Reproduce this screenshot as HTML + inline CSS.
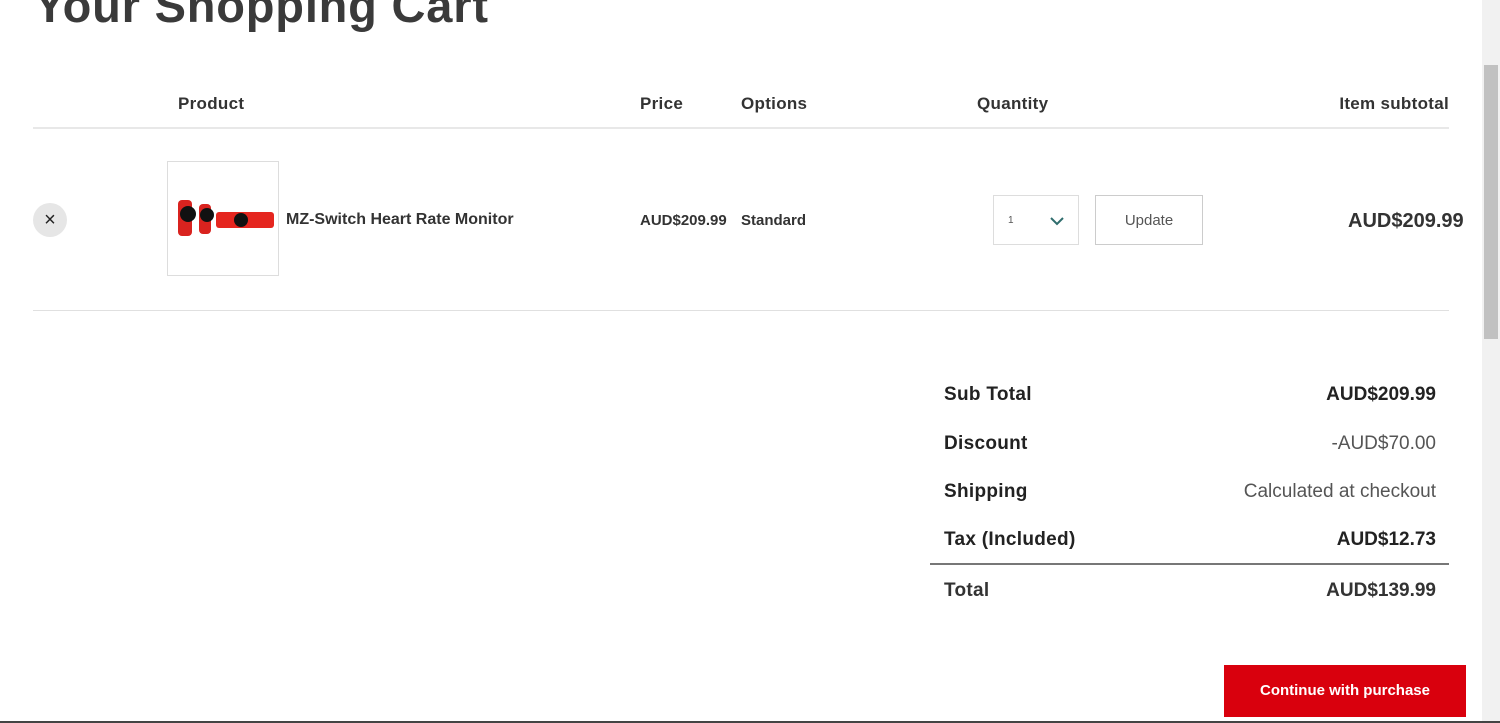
<!DOCTYPE html>
<html><head><meta charset="utf-8"><style>
*{margin:0;padding:0;box-sizing:border-box}
body{width:1500px;height:723px;overflow:hidden;background:#fff;font-family:"Liberation Sans",sans-serif;color:#333;position:relative}
.a{position:absolute;white-space:nowrap}
.h{font-weight:bold;font-size:17px;color:#333;letter-spacing:0.3px}
.b{font-weight:bold}
</style></head><body>
<div class="a" style="left:34px;top:-22px;font-size:47px;font-weight:bold;color:#3a3a3a;letter-spacing:0.8px">Your Shopping Cart</div>
<div class="a h" style="left:178px;top:94px">Product</div>
<div class="a h" style="left:640px;top:94px">Price</div>
<div class="a h" style="left:741px;top:94px">Options</div>
<div class="a h" style="left:977px;top:94px">Quantity</div>
<div class="a h" style="right:51px;top:94px">Item subtotal</div>
<div class="a" style="left:33px;top:127px;width:1416px;height:2px;background:#e8e8e8"></div>
<div class="a" style="left:33px;top:203px;width:34px;height:34px;border-radius:50%;background:#e6e6e6;text-align:center;line-height:34px;font-size:20px;color:#222">×</div>
<div class="a" style="left:167px;top:161px;width:112px;height:115px;border:1px solid #ddd;background:#fff">
<svg width="110" height="113" viewBox="0 0 110 113"><rect x="10" y="38" width="14" height="36" rx="4" fill="#d9231f"/><rect x="31" y="42" width="12" height="30" rx="4" fill="#d9231f"/><rect x="48" y="50" width="58" height="16" rx="3" fill="#e5261f"/><circle cx="20" cy="52" r="8" fill="#111"/><circle cx="39" cy="53" r="7" fill="#111"/><circle cx="73" cy="58" r="7" fill="#111"/></svg></div>
<div class="a b" style="left:286px;top:211px;font-size:16px">MZ-Switch Heart Rate Monitor</div>
<div class="a b" style="left:640px;top:212px;font-size:15px">AUD$209.99</div>
<div class="a b" style="left:741px;top:212px;font-size:15px">Standard</div>
<div class="a" style="left:993px;top:195px;width:86px;height:50px;border:1px solid #ddd"><span class="a" style="left:14px;top:19px;font-size:10px;color:#555">1</span>
<svg class="a" style="left:56px;top:20px" width="14" height="10" viewBox="0 0 14 10"><path d="M1 2 L7 8 L13 2" stroke="#2f6d6d" stroke-width="2" fill="none"/></svg></div>
<div class="a" style="left:1095px;top:195px;width:108px;height:50px;border:1px solid #ccc;text-align:center;line-height:50px;font-size:15px;color:#555">Update</div>
<div class="a b" style="left:1348px;top:210px;font-size:20px">AUD$209.99</div>
<div class="a" style="left:33px;top:310px;width:1416px;height:1px;background:#e0e0e0"></div>
<div class="a h" style="left:944px;top:384px;font-size:19px;color:#222">Sub Total</div>
<div class="a b" style="right:64px;top:384px;font-size:19px;color:#222">AUD$209.99</div>
<div class="a h" style="left:944px;top:433px;font-size:19px;color:#222">Discount</div>
<div class="a" style="right:64px;top:433px;font-size:19px;color:#555">-AUD$70.00</div>
<div class="a h" style="left:944px;top:481px;font-size:19px;color:#222">Shipping</div>
<div class="a" style="right:64px;top:481px;font-size:19px;color:#555">Calculated at checkout</div>
<div class="a h" style="left:944px;top:529px;font-size:19px;color:#222">Tax (Included)</div>
<div class="a b" style="right:64px;top:529px;font-size:19px;color:#222">AUD$12.73</div>
<div class="a" style="left:930px;top:563px;width:519px;height:2px;background:#777"></div>
<div class="a h" style="left:944px;top:580px;font-size:19px">Total</div>
<div class="a b" style="right:64px;top:580px;font-size:19px">AUD$139.99</div>
<div class="a" style="left:1224px;top:665px;width:242px;height:52px;background:#d9000d;color:#fff;text-align:center;line-height:52px;font-size:15px;font-weight:bold">Continue with purchase</div>
<div class="a" style="left:1482px;top:0;width:18px;height:723px;background:#f1f1f1"></div>
<div class="a" style="left:1484px;top:65px;width:14px;height:274px;background:#c1c1c1"></div>
<div class="a" style="left:0;top:721px;width:1500px;height:2px;background:#444"></div>
</body></html>
